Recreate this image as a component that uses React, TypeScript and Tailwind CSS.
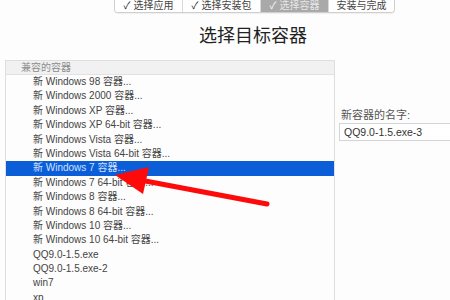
import React from 'react';

const steps = [
  { label: '选择应用', done: true },
  { label: '选择安装包', done: true },
  { label: '选择容器', done: true, active: true },
  { label: '安装与完成', done: false },
];

const items = [
  '新 Windows 98 容器...',
  '新 Windows 2000 容器...',
  '新 Windows XP 容器...',
  '新 Windows XP 64-bit 容器...',
  '新 Windows Vista 容器...',
  '新 Windows Vista 64-bit 容器...',
  '新 Windows 7 容器...',
  '新 Windows 7 64-bit 容器...',
  '新 Windows 8 容器...',
  '新 Windows 8 64-bit 容器...',
  '新 Windows 10 容器...',
  '新 Windows 10 64-bit 容器...',
  'QQ9.0-1.5.exe',
  'QQ9.0-1.5.exe-2',
  'win7',
  'xp',
];

const SELECTED = 6;

export default function App() {
  return (
    <div
      className="relative w-[450px] h-[300px] overflow-hidden bg-[#fdfdfd] text-[#3a3a3a]"
      style={{ fontFamily: '"Liberation Sans", "Noto Sans CJK SC", sans-serif' }}
    >
      {/* step tabs */}
      <div className="flex pl-[114px]">
        <div className="flex h-[14px] mt-[-1px] border border-t-0 border-[#cfcfcf] rounded-b-[4px] overflow-hidden text-[10px] leading-[13px] shadow-[0_1px_1px_rgba(0,0,0,0.06)]">
          {steps.map((s, i) => (
            <div
              key={s.label}
              className={
                'flex items-center justify-center gap-[3px] ' +
                (i > 0 ? 'border-l border-[#d8d8d8] ' : '') +
                (s.active ? 'bg-[#a9a9a9] text-[#e6e6e6] ' : 'bg-white text-[#444] ') +
                (i === 0 ? 'w-[67px]' : i === 1 ? 'w-[78px]' : i === 2 ? 'w-[68px]' : 'w-[66px]')
              }
            >
              {s.done && <span className={s.active ? 'text-white' : 'text-[#111]'}>✓</span>}
              <span>{s.label}</span>
            </div>
          ))}
        </div>
      </div>

      {/* title */}
      <div className="flex justify-center pl-[56px] mt-[12px]">
        <h1 className="text-[18px] leading-[22px] text-[#222]">选择目标容器</h1>
      </div>

      <div className="flex mt-[13px]">
        {/* container list */}
        <div className="shrink-0 ml-[5px] w-[330px] border-l border-r border-t border-[#dedede]">
          <div className="h-[14px] bg-[#f1f1f1] border-b border-[#e2e2e2] pl-[15px] text-[10px] leading-[14px] text-[#8c8c8c]">
            兼容的容器
          </div>
          {items.map((t, i) => (
            <div
              key={t}
              className={
                'h-[14.4px] pl-[27px] text-[10px] leading-[14.4px] whitespace-nowrap ' +
                (i === SELECTED ? 'bg-[#0b5ed7] text-[#cfe0ff]' : 'text-[#444]')
              }
            >
              {t}
            </div>
          ))}
        </div>

        {/* name field */}
        <div className="flex flex-col shrink-0 ml-[4px] mt-[48px]">
          <label className="text-[11px] leading-[14px] text-[#555] pl-[2px]">新容器的名字:</label>
          <div className="mt-[1px] w-[130px] h-[18px] border border-[#d4d4d4] bg-white pl-[4px] text-[10.5px] leading-[16px] text-[#333]">
            QQ9.0-1.5.exe-3
          </div>
        </div>
      </div>

      {/* red annotation arrow */}
      <svg className="absolute left-0 top-0" width="450" height="300" viewBox="0 0 450 300">
        <line x1="140" y1="180" x2="267" y2="204" stroke="#ff0a0a" strokeWidth="5" strokeLinecap="round" />
        <polygon points="115,175 149,167 143,194" fill="#ff0a0a" />
      </svg>
    </div>
  );
}
